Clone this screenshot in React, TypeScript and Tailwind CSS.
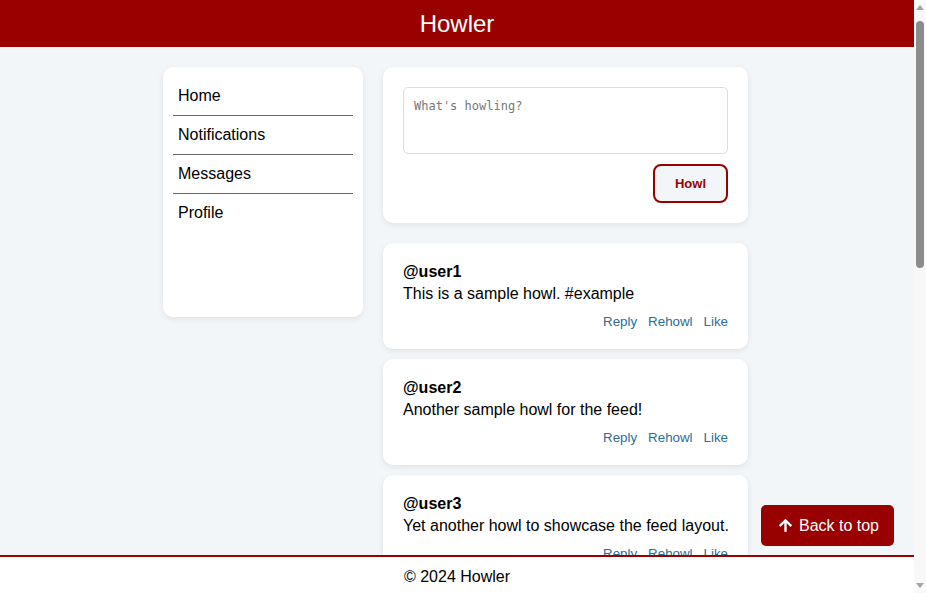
import React from "react";
import { FaArrowUp } from "react-icons/fa";

const howls = [
  { user: "@user1", text: "This is a sample howl. #example" },
  { user: "@user2", text: "Another sample howl for the feed!" },
  { user: "@user3", text: "Yet another howl to showcase the feed layout." },
  { user: "@user4", text: "Howling at the moon tonight. #fullmoon" },
  { user: "@user5", text: "Just joined Howler. Hello, pack!" },
  { user: "@user6", text: "Coffee first, howls later." },
  { user: "@user7", text: "Check out this cool new feature! #update" },
  { user: "@user8", text: "The pack is strong today." },
  { user: "@user9", text: "Last howl of the day. Good night!" },
];

function FakeScrollbar() {
  return (
    <div className="fixed top-0 right-0 bottom-0 w-[12px] bg-[#f8f8f8] flex flex-col items-center z-30">
      <svg width="12" height="14" viewBox="0 0 12 14" className="shrink-0">
        <polygon points="2,10 10,10 6,5" fill="#a3a3a3" />
      </svg>
      <div className="mt-[7px] w-[8px] h-[247px] rounded-[4px] bg-[#8c8c8c]" />
      <div className="flex-1" />
      <svg width="12" height="14" viewBox="0 0 12 14" className="shrink-0">
        <polygon points="2,4 10,4 6,9" fill="#a3a3a3" />
      </svg>
    </div>
  );
}

export default function App() {
  return (
    <div
      className="min-h-screen bg-[#f3f6f9] text-black"
      style={{ fontFamily: '"Liberation Sans", Arial, sans-serif' }}
    >
      <div className="mr-[12px] pb-[70px]">
        <header className="h-[47px] bg-[#990000] flex items-center justify-center">
          <h1 className="text-white text-[24px] leading-[28px] font-normal">Howler</h1>
        </header>

        <div className="w-[588px] mx-auto mt-[20px] flex gap-[20px] items-start">
          <nav className="w-[200px] h-[250px] bg-white rounded-[10px] shadow-[0_2px_6px_rgba(0,0,0,0.08)] p-[10px] shrink-0">
            {["Home", "Notifications", "Messages", "Profile"].map((item, i, arr) => (
              <div
                key={item}
                className={
                  "px-[5px] py-[10px] text-[16px] leading-[18px] " +
                  (i < arr.length - 1 ? "border-b border-[#666666]" : "")
                }
              >
                {item}
              </div>
            ))}
          </nav>

          <main className="w-[365px] flex flex-col">
            <div className="bg-white rounded-[10px] shadow-[0_2px_6px_rgba(0,0,0,0.08)] p-[20px] flex flex-col">
              <textarea
                className="block w-full h-[67px] border border-[#dddddd] rounded-[5px] p-[10px] text-[12px] leading-[16px] resize-none outline-none placeholder:text-[#777777]"
                style={{ fontFamily: '"DejaVu Sans Mono", "Liberation Mono", monospace' }}
                placeholder="What's howling?"
              />
              <div className="flex justify-end mt-[10px]">
                <button className="w-[75px] h-[39px] border-2 border-[#990000] rounded-[8px] bg-[#f3f6f9] text-[#990000] text-[13px] font-bold">
                  Howl
                </button>
              </div>
            </div>

            <div className="mt-[20px] flex flex-col gap-[10px]">
              {howls.map((h) => (
                <div
                  key={h.user}
                  className="bg-white rounded-[10px] shadow-[0_2px_6px_rgba(0,0,0,0.08)] px-[20px] pt-[20px] pb-[19px]"
                >
                  <div className="font-bold text-[16px] leading-[18px]">{h.user}</div>
                  <div className="mt-[4px] text-[16px] leading-[18px] whitespace-nowrap">{h.text}</div>
                  <div className="mt-[11px] flex justify-end gap-[11px] text-[13.33px] leading-[16px] text-[#2c6e96]">
                    <span>Reply</span>
                    <span>Rehowl</span>
                    <span>Like</span>
                  </div>
                </div>
              ))}
            </div>
          </main>
        </div>
      </div>

      <button className="fixed right-[32px] bottom-[47px] h-[41px] pl-[17px] pr-[15px] bg-[#990000] text-white rounded-[5px] flex items-center gap-[6px] text-[16px] z-20">
        <FaArrowUp size={15} />
        <span>Back to top</span>
      </button>

      <footer className="fixed left-0 right-[12px] bottom-0 h-[38px] pt-[3px] bg-white border-t-2 border-[#990000] flex items-center justify-center text-[16px] leading-[18px] z-10">
        © 2024 Howler
      </footer>

      <FakeScrollbar />
    </div>
  );
}
